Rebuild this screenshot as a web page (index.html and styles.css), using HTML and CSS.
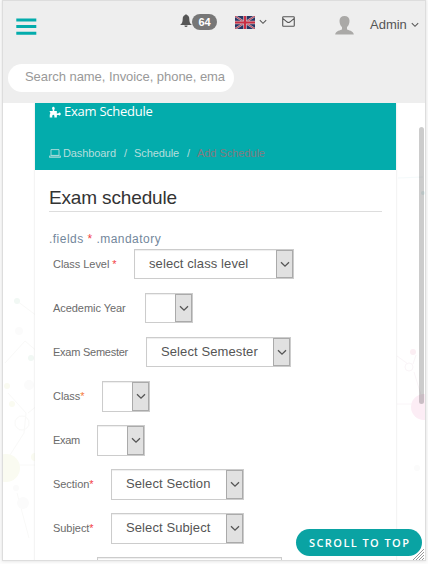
FILE: index.html
```html
<!DOCTYPE html>
<html lang="en">
<head>
<meta charset="utf-8">
<title>Exam Schedule</title>
<link rel="stylesheet" href="styles.css">
</head>
<body>
<svg class="defs" width="0" height="0"><symbol id="chev" viewBox="0 0 10 7"><path d="M1 1.300 5 5.200 9 1.300" fill="none" stroke="currentColor" stroke-width="1.300"/></symbol></svg>
<div class="window">
  <header class="header">
    <div class="topbar">
      <svg class="menu" viewBox="0 0 20 17"><path d="M.3.600h20v3H.3zM.3 7h20v3H.3zM.3 13.700h20v3H.3z" fill="#03acac"/></svg>
      <svg class="bell" viewBox="0 0 12 14"><path d="M5.200 1a.8.800 0 0 1 1.600 0C8.600 1.400 9.300 3 9.300 5c0 3 .8 4.700 2.700 6H0c1.900-1.300 2.700-3 2.700-6 0-2 .7-3.600 2.500-4zM4.400 11.500h3.200a1.600 1.600 0 0 1-3.200 0z" fill="#555"/></svg>
      <span class="badge">64</span>
      <svg class="flag" viewBox="0 0 20 13"><path fill="#263563" d="M0 0h20v13H0z"/><path d="M0 0 20 13M20 0 0 13" stroke="#b5aebe" stroke-width="2.200"/><path d="M0 0 20 13M20 0 0 13" stroke="#c84050" stroke-width="1"/><path d="M10 0v13M0 6.500h20" stroke="#c9bcc9" stroke-width="3.600"/><path d="M10 0v13M0 6.500h20" stroke="#c92e42" stroke-width="2.200"/></svg>
      <svg class="chev flagchev"><use href="#chev"/></svg>
      <svg class="mail" viewBox="0 0 14 12"><path d="M1.500.8h11q.8 0 .8.800v8.800q0 .8-.8.800h-11q-.8 0-.8-.8V1.600q0-.8.800-.8zM1 2.800 5.600 6.600q1.400 1.100 2.800 0L13 2.800" fill="none" stroke="#555" stroke-width="1.200"/></svg>
      <svg class="avatar" viewBox="0 0 19 19"><path d="M9.500 0c3 0 5 1.700 5 4.800 0 2.700-1 5-2.500 6.300v2.200c1 1.200 6.500 1.300 6.800 5.200H.2c.3-3.900 5.800-4 6.800-5.200v-2.200C5.500 9.800 4.500 7.500 4.500 4.800 4.500 1.700 6.500 0 9.500 0z" fill="#aaa9a7"/></svg>
      <span class="admin">Admin</span>
      <svg class="chev"><use href="#chev"/></svg>
    </div>
    <div class="search"><span>Search name, Invoice, phone, ema</span></div>
  </header>
  <main class="content">
    <svg class="network" viewBox="0 0 422 457">
      <g fill="none" stroke="#f9f9f8"><path d="m14 198 20 15M2 260l20-22 14 12M5 290l18 20-2 20-14 22M25 310l10-8M2 362l32 0M14 390l12 45"/><circle cx="19" cy="320" r="7"/></g>
      <g fill="#f1f8f4"><circle cx="14" cy="198" r="3"/><circle cx="28" cy="255" r="3"/></g>
      <g fill="#fafbf1"><circle cx="4" cy="283" r="3"/><circle cx="9" cy="301" r="3"/><circle cx="3" cy="365" r="14"/><circle cx="32" cy="354" r="4"/></g>
      <g fill="#fbfbfb"><circle cx="16" cy="228" r="4"/><circle cx="26" cy="282" r="5"/><circle cx="20" cy="400" r="6"/><circle cx="13" cy="385" r="3"/><circle cx="414" cy="365" r="3"/></g>
      <g stroke="#faf5f8" fill="none"><path d="m394 253 11 8M410 261l3-9M411 269l11 36M394 301h18"/><circle cx="406" cy="264" r="4"/></g>
      <path d="M395 75l25-1" stroke="#f4fafb"/>
      <circle cx="410" cy="249" r="3" fill="#fbeef3"/><circle cx="421" cy="304" r="13" fill="#fcedf5"/><circle cx="420" cy="90" r="2" fill="#e8f4f5"/>
    </svg>
    <section class="card">
      <div class="banner">
        <div class="page-title"><svg viewBox="0 0 13 12"><path d="M4 5V3.500C2.900 2.500 3.200.2 4.700.2s2 2.300 1 3.300V5h2.800v3c1-.8 1.500-.5 2-.7.500-1.200 2.200-.8 2.200.9s-1.700 2-2.300 1.100c-.8-.3-1.200-.2-1.900.3V12H5.800c.3-2-.1-3-1.100-3s-1.400 1-1.100 3H.8V9C1.800 7.500 1.500 6.200.3 5z" fill="#fff"/></svg><span>Exam Schedule</span></div>
        <nav class="crumbs"><svg viewBox="0 0 12 9"><path d="M2 .6h8v5.800H2zM.3 7h11.400v1.300H.3z" fill="none" stroke="#b6dedd" stroke-width=".9"/></svg><span class="c1">Dashboard</span><span class="s1">/</span><span class="c2">Schedule</span><span class="s2">/</span><span class="current">Add Schedule</span></nav>
      </div>
      <div class="form">
        <h1><span>Exam schedule</span></h1>
        <p class="note"><span>.fields <b>*</b> .mandatory</span></p>
        <div class="row r1"><label>Class Level <b>*</b></label><div class="select"><span>select class level</span><i><svg class="chev"><use href="#chev"/></svg></i></div></div>
        <div class="row r2"><label>Acedemic Year</label><div class="select"><span></span><i><svg class="chev"><use href="#chev"/></svg></i></div></div>
        <div class="row r3"><label>Exam Semester</label><div class="select"><span>Select Semester</span><i><svg class="chev"><use href="#chev"/></svg></i></div></div>
        <div class="row r4"><label>Class<b class="orange">*</b></label><div class="select tall"><span></span><i><svg class="chev"><use href="#chev"/></svg></i></div></div>
        <div class="row r5"><label>Exam</label><div class="select tall"><span></span><i><svg class="chev"><use href="#chev"/></svg></i></div></div>
        <div class="row r6"><label>Section<b>*</b></label><div class="select tall"><span>Select Section</span><i><svg class="chev"><use href="#chev"/></svg></i></div></div>
        <div class="row r7"><label>Subject<b>*</b></label><div class="select tall"><span>Select Subject</span><i><svg class="chev"><use href="#chev"/></svg></i></div></div>
        <div class="row r8"><label></label><div class="select tall"></div></div>
      </div>
    </section>
  </main>
  <div class="scrollbar"></div>
  <div class="to-top"><span>SCROLL TO TOP</span></div>
  <svg class="grip" viewBox="0 0 11 11"><path d="M0 11 11 0M3 11l8-8M6 11l5-5M9 11l2-2" stroke="#999" stroke-width="1"/></svg>
</div>
</body>
</html>
```
FILE: styles.css
```css
* { box-sizing: border-box; }
body { margin: 0; height: 564px; overflow: hidden; background: #fcfcfc; font-family: "Liberation Sans", Arial, sans-serif; color: #555; }
svg { display: block; flex: none; }
span, label { white-space: nowrap; }
.defs { position: absolute; }
.window { position: relative; width: 424px; height: 561px; margin-left: 2px; border: 1px solid #ddd; background: #fff; overflow: hidden; box-shadow: 0 0 3px #ddd; }
.header { height: 102px; background: #eee; }
.topbar { display: flex; align-items: flex-start; height: 63px; padding: 13px 0 0 13px; }
.menu { width: 20px; height: 17px; margin: 4px 144px 0 0; overflow: visible; }
.bell { width: 12px; height: 14px; }
.badge { width: 25px; height: 16px; border-radius: 8px; background: #777; color: #fff; font: bold 11px/16px "Liberation Sans", sans-serif; text-align: center; margin-right: 18px; }
.flag { width: 20px; height: 13px; margin: 2px 4px 0 0; }
.chev { width: 8px; height: 6px; margin-top: 8px; }
.flagchev { margin: 5px 15px 0 0; }
.mail { width: 13px; height: 11px; margin: 2px 40px 0 0; }
.avatar { width: 19px; height: 19px; margin: 2px 16px 0 0; }
.admin { width: 37px; margin: 2px 4px 0 0; font-size: 13px; line-height: 17px; }
.search { width: 226px; height: 28px; margin-left: 5px; padding-left: 17px; border-radius: 14px; background: #fff; color: #999; font-size: 13px; line-height: 26px; letter-spacing: -.05px; }
.content { display: grid; height: 457px; overflow: hidden; }
.network { grid-area: 1 / 1; width: 422px; height: 457px; }
.card { grid-area: 1 / 1; width: 361px; height: 500px; margin-left: 32px; background: #fff; box-shadow: 0 0 2px #ddd; }
.banner { height: 67px; padding: 1px 0 0 14px; background: #03acac; }
.page-title { display: flex; align-items: center; gap: 3px; height: 15px; color: #fff; font: 13px/15px "Open Sans", sans-serif; }
.page-title svg { width: 12px; height: 12px; }
.page-title span { letter-spacing: -.25px; }
.crumbs { display: flex; align-items: center; height: 14px; margin-top: 27px; color: #b6dedd; font-size: 11px; line-height: 14px; }
.crumbs svg { width: 12px; height: 9px; margin-right: 2px; }
.c1, .c2 { letter-spacing: -.1px; }
.c1 { width: 61px; }
.s1, .s2 { width: 10px; }
.c2 { width: 53px; }
.current { color: #817b80; letter-spacing: -.05px; }
.form { padding: 0 14px; }
h1 { height: 42px; margin: 0; padding-top: 17px; border-bottom: 1px solid #ddd; color: #333; font-size: 19px; line-height: 22px; font-weight: normal; letter-spacing: -.15px; }
.note { height: 30px; margin: 0; padding-top: 19px; color: #73879c; font-size: 12px; line-height: 16px; letter-spacing: .47px; }
b { color: #f33f46; font-weight: normal; }
.orange { color: #f47b3e; }
.row { display: flex; align-items: center; height: 44px; padding-left: 4px; }
label { flex: none; font-size: 11px; line-height: 14px; color: #6b6b6b; letter-spacing: -.05px; }
.select { display: flex; flex: none; height: 30px; border: 1px solid #ccc; background: #fff; box-shadow: inset 0 1px 1px #eee; color: #555; }
.tall { height: 31px; }
.select > span { flex: 1; padding-left: 14px; font-size: 13px; line-height: 27px; letter-spacing: .1px; }
.select i { display: flex; flex: none; align-items: center; justify-content: center; width: 17px; border: 1px solid #aaa; background: #e1e1e1; }
.select .chev { width: 10px; height: 7px; margin: 0; }
.r1 label { width: 81px; } .r1 .select { width: 160px; }
.r2 label { width: 92px; } .r2 .select { width: 48px; }
.r3 label { width: 93px; letter-spacing: -.25px; } .r3 .select { width: 145px; }
.r4 label { width: 49px; } .r4 .select { width: 48px; }
.r5 label { width: 44px; letter-spacing: -.3px; } .r5 .select { width: 48px; }
.r6 label, .r7 label { width: 58px; } .r6 .select, .r7 .select { width: 133px; }
.r8 label { width: 44px; } .r8 .select { width: 185px; }
.scrollbar { position: absolute; top: 126px; right: 1px; width: 5px; height: 277px; border-radius: 3px; background: rgba(0,0,0,.2); }
.to-top { position: absolute; left: 293px; top: 528px; width: 126px; height: 27px; padding-left: 13px; border-radius: 14px; background: #0aa3a3; color: #fff; font: 600 11px/28px "Open Sans", sans-serif; letter-spacing: 1.42px; }
.grip { position: absolute; right: 1px; bottom: 0; width: 11px; height: 11px; }
```
